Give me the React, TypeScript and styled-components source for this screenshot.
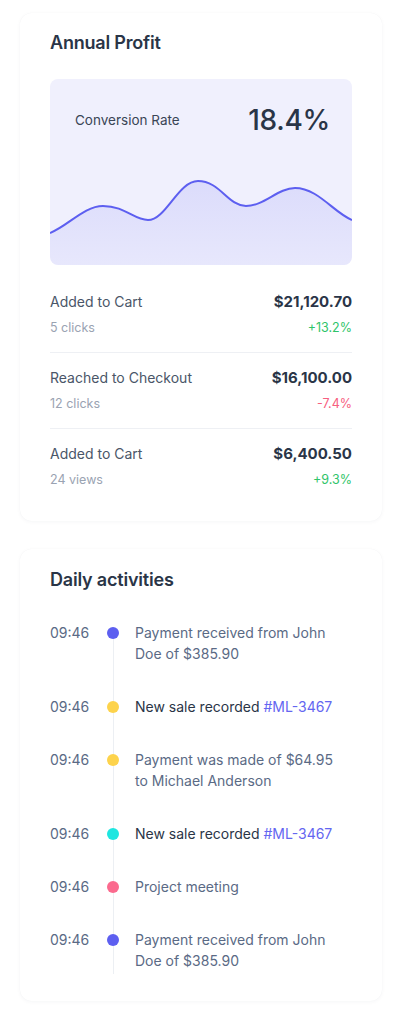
import React from "react";
import styled, { createGlobalStyle } from "styled-components";

const Global = createGlobalStyle`
  html, body { margin: 0; padding: 0; background: #ffffff; }
  body { font-family: Inter, "Noto Sans", sans-serif; -webkit-font-smoothing: antialiased; }
  * { box-sizing: border-box; }
`;

const Page = styled.div`
  display: flex;
  flex-direction: column;
  gap: 28px;
  padding: 13px 21px 34px 20px;
`;

const Card = styled.section<{ $pt: number; $pb: number }>`
  background: #fff;
  border-radius: 12px;
  box-shadow: 0 1px 4px rgba(30, 40, 70, 0.04), 0 0 1px rgba(30, 40, 70, 0.05);
  padding: ${(p) => p.$pt}px 30px ${(p) => p.$pb}px;
`;

const Title = styled.h2<{ $mb: number }>`
  margin: 0 0 ${(p) => p.$mb}px;
  font-size: 18px;
  line-height: 24px;
  font-weight: 600;
  color: #2a3547;
  letter-spacing: -0.2px;
`;

const ChartBox = styled.div`
  position: relative;
  height: 186px;
  border-radius: 8px;
  background: #f0f0fd;
  overflow: hidden;
  display: flex;
  flex-direction: column;
`;

const ChartHead = styled.div`
  position: relative;
  display: flex;
  justify-content: space-between;
  align-items: center;
  padding: 24px 22px 0 25px;
`;

const ChartLabel = styled.span`
  font-size: 13.5px;
  color: #3a4556;
`;

const ChartValue = styled.span`
  font-size: 28px;
  font-weight: 500;
  color: #2a3547;
  letter-spacing: -0.3px;
`;

const Wave = styled.svg`
  position: absolute;
  left: 0;
  bottom: 0;
  width: 100%;
  height: 100%;
`;

const Rows = styled.div`
  margin-top: 12px;
`;

const Row = styled.div<{ $last?: boolean }>`
  display: grid;
  grid-template-columns: 1fr auto;
  row-gap: 5px;
  padding: 14px 0;
  border-bottom: ${(p) => (p.$last ? "none" : "1px solid #eef0f4")};
`;

const RowLabel = styled.span`
  font-size: 14px;
  line-height: 22px;
  color: #4a5668;
  align-self: end;
`;

const RowAmount = styled.span`
  font-size: 15px;
  line-height: 22px;
  font-weight: 700;
  color: #2a3547;
  text-align: right;
  align-self: start;
`;

const RowSub = styled.span`
  font-size: 12.5px;
  line-height: 20px;
  color: #9aa3b2;
`;

const Change = styled.span<{ $up: boolean }>`
  font-size: 12.5px;
  line-height: 20px;
  text-align: right;
  color: ${(p) => (p.$up ? "#2fc469" : "#f7607f")};
`;

const Timeline = styled.ul`
  list-style: none;
  margin: 0;
  padding: 0;
`;

const Item = styled.li`
  display: grid;
  grid-template-columns: 57px 12px 1fr;
`;

const Time = styled.span`
  font-size: 14px;
  line-height: 21px;
  color: #5a6a85;
`;

const Marker = styled.span<{ $first?: boolean; $last?: boolean }>`
  position: relative;
  align-self: stretch;
  &::before {
    content: "";
    position: absolute;
    left: 5.5px;
    width: 1px;
    top: ${(p) => (p.$first ? "10px" : "0")};
    bottom: ${(p) => (p.$last ? "-3px" : "0")};
    background: #eceff3;
  }
`;

const Dot = styled.span<{ $color: string }>`
  position: relative;
  display: block;
  width: 12px;
  height: 12px;
  margin-top: 4.5px;
  border-radius: 50%;
  background: ${(p) => p.$color};
`;

const Text = styled.span<{ $last?: boolean; $dark?: boolean }>`
  padding: 0 0 ${(p) => (p.$last ? 0 : 32)}px 16px;
  max-width: 228px;
  font-size: 14px;
  line-height: 21px;
  color: ${(p) => (p.$dark ? "#2a3547" : "#5a6a85")};
`;

const Tag = styled.span`
  color: #6466f1;
`;

const rows = [
  { label: "Added to Cart", amount: "$21,120.70", sub: "5 clicks", change: "+13.2%", up: true },
  { label: "Reached to Checkout", amount: "$16,100.00", sub: "12 clicks", change: "-7.4%", up: false },
  { label: "Added to Cart", amount: "$6,400.50", sub: "24 views", change: "+9.3%", up: true },
];

type Act = { color: string; text: string; tag?: string };
const acts: Act[] = [
  { color: "#5d5ff0", text: "Payment received from John Doe of $385.90" },
  { color: "#fdd34c", text: "New sale recorded", tag: "#ML-3467" },
  { color: "#fdd34c", text: "Payment was made of $64.95 to Michael Anderson" },
  { color: "#1ee6e0", text: "New sale recorded", tag: "#ML-3467" },
  { color: "#fb6a8e", text: "Project meeting" },
  { color: "#5d5ff0", text: "Payment received from John Doe of $385.90" },
];

const wavePath =
  "M0,154 C18,147 34,127 53,127 C75,127 84,141 98,141 C116,141 128,102 148,102 C170,102 178,127 196,127 C214,127 228,109 245,109 C268,109 284,134 302,141";

export default function App() {
  return (
    <>
      <Global />
      <Page>
        <Card $pt={18} $pb={17}>
          <Title $mb={24}>Annual Profit</Title>
          <ChartBox>
            <Wave viewBox="0 0 302 186" preserveAspectRatio="none">
              <defs>
                <linearGradient id="wf" x1="0" y1="0" x2="0" y2="1">
                  <stop offset="0" stopColor="#5d5ff0" stopOpacity="0.14" />
                  <stop offset="1" stopColor="#5d5ff0" stopOpacity="0.06" />
                </linearGradient>
              </defs>
              <path d={`${wavePath} L302,186 L0,186 Z`} fill="url(#wf)" />
              <path d={wavePath} fill="none" stroke="#5d5ff0" strokeWidth="2" />
            </Wave>
            <ChartHead>
              <ChartLabel>Conversion Rate</ChartLabel>
              <ChartValue>18.4%</ChartValue>
            </ChartHead>
          </ChartBox>
          <Rows>
            {rows.map((r, i) => (
              <Row key={i} $last={i === rows.length - 1}>
                <RowLabel>{r.label}</RowLabel>
                <RowAmount>{r.amount}</RowAmount>
                <RowSub>{r.sub}</RowSub>
                <Change $up={r.up}>{r.change}</Change>
              </Row>
            ))}
          </Rows>
        </Card>
        <Card $pt={19} $pb={30}>
          <Title $mb={30}>Daily activities</Title>
          <Timeline>
            {acts.map((a, i) => {
              const last = i === acts.length - 1;
              return (
                <Item key={i}>
                  <Time>09:46</Time>
                  <Marker $first={i === 0} $last={last}>
                    <Dot $color={a.color} />
                  </Marker>
                  <Text $last={last} $dark={!!a.tag}>
                    {a.text}
                    {a.tag && <> <Tag>{a.tag}</Tag></>}
                  </Text>
                </Item>
              );
            })}
          </Timeline>
        </Card>
      </Page>
    </>
  );
}
